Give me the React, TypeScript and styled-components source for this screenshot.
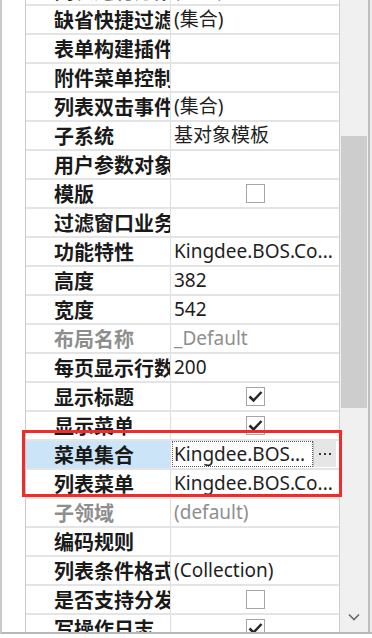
import React from 'react';
import styled, { createGlobalStyle } from 'styled-components';

const Global = createGlobalStyle`
  html, body { margin: 0; padding: 0; background: #ffffff; }
  body { width: 372px; height: 638px; overflow: hidden; }
`;

const Frame = styled.div`
  position: relative;
  width: 372px;
  height: 638px;
  background: #ffffff;
`;

const Body = styled.div`
  display: flex;
  height: 634px;
  box-sizing: border-box;
  border-left: 2px solid #cacaca;
  border-bottom: 2px solid #b8b8b8;
`;

const Gutter = styled.div`
  width: 23px;
  flex: none;
  border-right: 1px solid #c9c9c9;
  background: #ffffff;
`;

const Viewport = styled.div`
  width: 313px;
  flex: none;
  overflow: hidden;
`;

const List = styled.div`
  margin-top: -23px;
  display: flex;
  flex-direction: column;
`;

const Row = styled.div`
  display: grid;
  grid-template-columns: 145px 168px;
  height: 29px;
  overflow: hidden;
`;

const Label = styled.div<{ $dim?: boolean; $selected?: boolean }>`
  box-sizing: border-box;
  height: 29px;
  padding-left: 28px;
  border-right: 1px solid #dedede;
  border-bottom: 2px solid #e4e4e4;
  background: ${(p) => (p.$selected ? '#cce4f7' : '#ffffff')};
  color: ${(p) => (p.$dim ? '#8e8e8e' : '#1a1a1a')};
  font-family: "Noto Sans CJK SC", "Noto Sans", sans-serif;
  font-weight: 700;
  font-size: 20px;
  line-height: 27px;
  white-space: nowrap;
  overflow: hidden;
`;

const Value = styled.div<{ $dim?: boolean }>`
  box-sizing: border-box;
  height: 29px;
  padding-left: 3px;
  border-bottom: 2px solid #e4e4e4;
  color: ${(p) => (p.$dim ? '#8e8e8e' : '#1e1e1e')};
  font-family: "Noto Sans", "Noto Sans CJK SC", sans-serif;
  font-size: 19px;
  line-height: 27px;
  white-space: nowrap;
  overflow: hidden;
  display: flex;
  align-items: center;
`;

const CheckCell = styled(Value)`
  justify-content: center;
  padding-left: 0;
`;

const EditCell = styled.div`
  box-sizing: border-box;
  height: 29px;
  border-bottom: 2px solid #e4e4e4;
  display: flex;
  align-items: stretch;
  padding: 0 3px 1px 1px;
`;

const EditText = styled.div`
  flex: 1;
  box-sizing: border-box;
  border: 1px dotted #5a5a5a;
  padding-left: 1px;
  color: #1e1e1e;
  font-family: "Noto Sans", "Noto Sans CJK SC", sans-serif;
  font-size: 19px;
  line-height: 25px;
  white-space: nowrap;
  overflow: hidden;
`;

const EllipsisButton = styled.div`
  width: 22px;
  flex: none;
  background: #e6e6e6;
  border-left: 1px solid #c4c4c4;
  display: flex;
  align-items: center;
  justify-content: center;
  gap: 3px;
`;

const Dot = styled.span`
  width: 2px;
  height: 2px;
  background: #3a3a3a;
`;

const Box = styled.div`
  width: 17px;
  height: 17px;
  border: 1.5px solid #a6a6a6;
  background: #ffffff;
  display: flex;
  align-items: center;
  justify-content: center;
`;

const Scrollbar = styled.div`
  width: 28px;
  flex: none;
  border-left: 1px solid #cdcdcd;
  background: #f0f0f0;
  display: flex;
  flex-direction: column;
  align-items: center;
`;

const Thumb = styled.div`
  width: 26px;
  height: 272px;
  margin-top: 136px;
  background: #cdcdcd;
`;

const ArrowSlot = styled.div`
  margin-top: auto;
  height: 34px;
  display: flex;
  align-items: flex-start;
  justify-content: center;
  padding-top: 14px;
  box-sizing: border-box;
`;

const RightEdge = styled.div`
  width: 2px;
  flex: none;
  background: #bdbdbd;
  border-right: 2px solid #ececec;
`;

const Highlight = styled.div`
  position: absolute;
  left: 22px;
  top: 430px;
  width: 320px;
  height: 67px;
  box-sizing: border-box;
  border: 3px solid #f22a2a;
  pointer-events: none;
`;

type Item = {
  label: string;
  value?: string;
  dim?: boolean;
  check?: boolean;
  edit?: boolean;
  selected?: boolean;
};

const items: Item[] = [
  { label: '列表过滤方案插件', value: '(集合)' },
  { label: '缺省快捷过滤方案', value: '(集合)' },
  { label: '表单构建插件', value: '' },
  { label: '附件菜单控制', value: '' },
  { label: '列表双击事件', value: '(集合)' },
  { label: '子系统', value: '基对象模板' },
  { label: '用户参数对象', value: '' },
  { label: '模版', check: false },
  { label: '过滤窗口业务对象', value: '' },
  { label: '功能特性', value: 'Kingdee.BOS.Co...' },
  { label: '高度', value: '382' },
  { label: '宽度', value: '542' },
  { label: '布局名称', value: '_Default', dim: true },
  { label: '每页显示行数', value: '200' },
  { label: '显示标题', check: true },
  { label: '显示菜单', check: true },
  { label: '菜单集合', value: 'Kingdee.BOS...', edit: true, selected: true },
  { label: '列表菜单', value: 'Kingdee.BOS.Co...' },
  { label: '子领域', value: '(default)', dim: true },
  { label: '编码规则', value: '' },
  { label: '列表条件格式', value: '(Collection)' },
  { label: '是否支持分发', check: false },
  { label: '写操作日志', check: true },
];

const CheckMark = () => (
  <svg width="15" height="13" viewBox="0 0 15 13">
    <path d="M1.5 6.5 L5.5 10.5 L13.5 2" fill="none" stroke="#262626" strokeWidth="2.5" />
  </svg>
);

const DownChevron = () => (
  <svg width="12" height="10" viewBox="0 0 12 10">
    <path d="M1 2.5 L6 7.5 L11 2.5" fill="none" stroke="#6a6a6a" strokeWidth="1.6" />
  </svg>
);

export default function App() {
  return (
    <Frame>
      <Global />
      <Body>
        <Gutter />
        <Viewport>
          <List>
            {items.map((it, i) => (
              <Row key={i}>
                <Label $dim={it.dim} $selected={it.selected}>{it.label}</Label>
                {it.check !== undefined ? (
                  <CheckCell>
                    <Box>{it.check ? <CheckMark /> : null}</Box>
                  </CheckCell>
                ) : it.edit ? (
                  <EditCell>
                    <EditText>{it.value}</EditText>
                    <EllipsisButton>
                      <Dot />
                      <Dot />
                      <Dot />
                    </EllipsisButton>
                  </EditCell>
                ) : (
                  <Value $dim={it.dim}>{it.value}</Value>
                )}
              </Row>
            ))}
          </List>
        </Viewport>
        <Scrollbar>
          <Thumb />
          <ArrowSlot>
            <DownChevron />
          </ArrowSlot>
        </Scrollbar>
        <RightEdge />
      </Body>
      <Highlight />
    </Frame>
  );
}
